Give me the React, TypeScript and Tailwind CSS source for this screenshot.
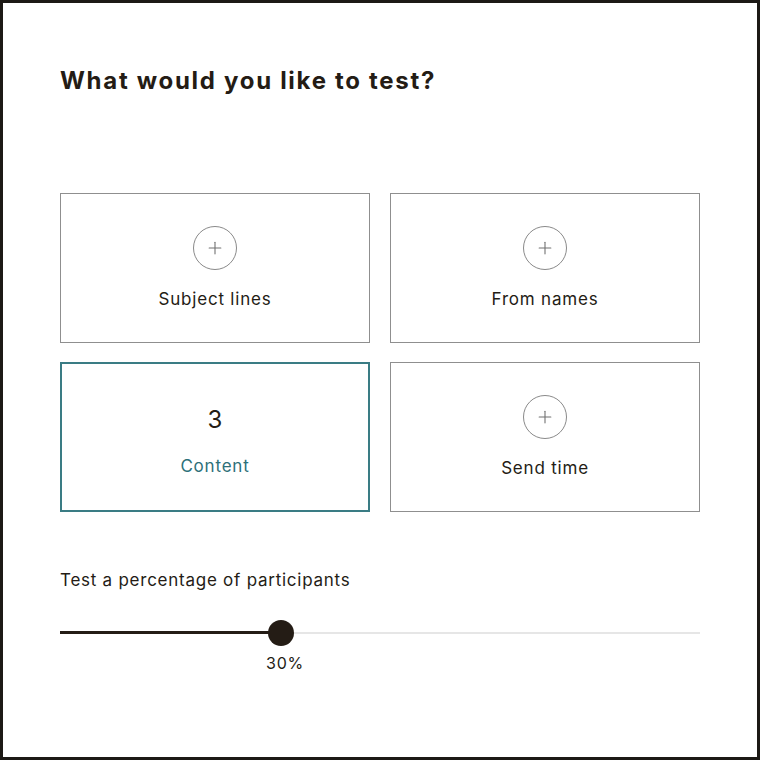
import { Plus } from 'lucide-react';

const options = [
  { name: 'Subject lines', count: null },
  { name: 'From names', count: null },
  { name: 'Content', count: 3 },
  { name: 'Send time', count: null },
];

const App = () => {
  return (
    <div
      className="h-[760px] w-[760px] border-[3px] border-[#1c1915] bg-white text-[#241c15]"
      style={{ fontFamily: 'Inter, "Noto Sans", sans-serif' }}
    >
      <div className="px-[57px] pt-[61px]">
        <h1 className="text-[24px] font-bold leading-[34px] tracking-[1.7px]">What would you like to test?</h1>

        <div className="mt-[95px] grid grid-cols-2 gap-x-[20px] gap-y-[19px]">
          {options.map((opt) => {
            const active = opt.count !== null;
            return (
              <div
                key={opt.name}
                className={
                  active
                    ? 'flex h-[150px] flex-col items-center border-2 border-[#3a7c84]'
                    : 'flex h-[150px] flex-col items-center border border-[#8f8f8f]'
                }
              >
                {active ? (
                  <div className="mt-[34px] flex h-[43px] items-center text-[24px] leading-none text-[#241c15]">
                    {opt.count}
                  </div>
                ) : (
                  <div className="mt-[32px] flex h-[44px] w-[44px] items-center justify-center rounded-full border-[1.5px] border-[#8a8a8a]">
                    <Plus className="size-[20px] text-[#707070]" strokeWidth={1.3} />
                  </div>
                )}
                <div
                  className={
                    active
                      ? 'mt-[13px] text-[17px] leading-[24px] tracking-[0.8px] text-[#2d7079]'
                      : 'mt-[17px] text-[17px] leading-[24px] tracking-[0.8px] text-[#241c15]'
                  }
                >
                  {opt.name}
                </div>
              </div>
            );
          })}
        </div>

        <p className="mt-[56px] text-[17px] leading-[24px] tracking-[0.75px]">Test a percentage of participants</p>

        <div className="relative mt-[28px] h-[26px]">
          <div className="absolute left-0 right-0 top-[12px] h-[2px] bg-[#e6e6e6]" />
          <div className="absolute left-0 top-[11px] h-[3px] w-[221px] bg-[#241c15]" />
          <div className="absolute left-[208px] top-0 h-[26px] w-[26px] rounded-full bg-[#241c15]" />
        </div>
        <div className="ml-[206px] mt-[6px] text-[16px] leading-[22px] tracking-[0.8px]">30%</div>
      </div>
    </div>
  );
};

export default App;
